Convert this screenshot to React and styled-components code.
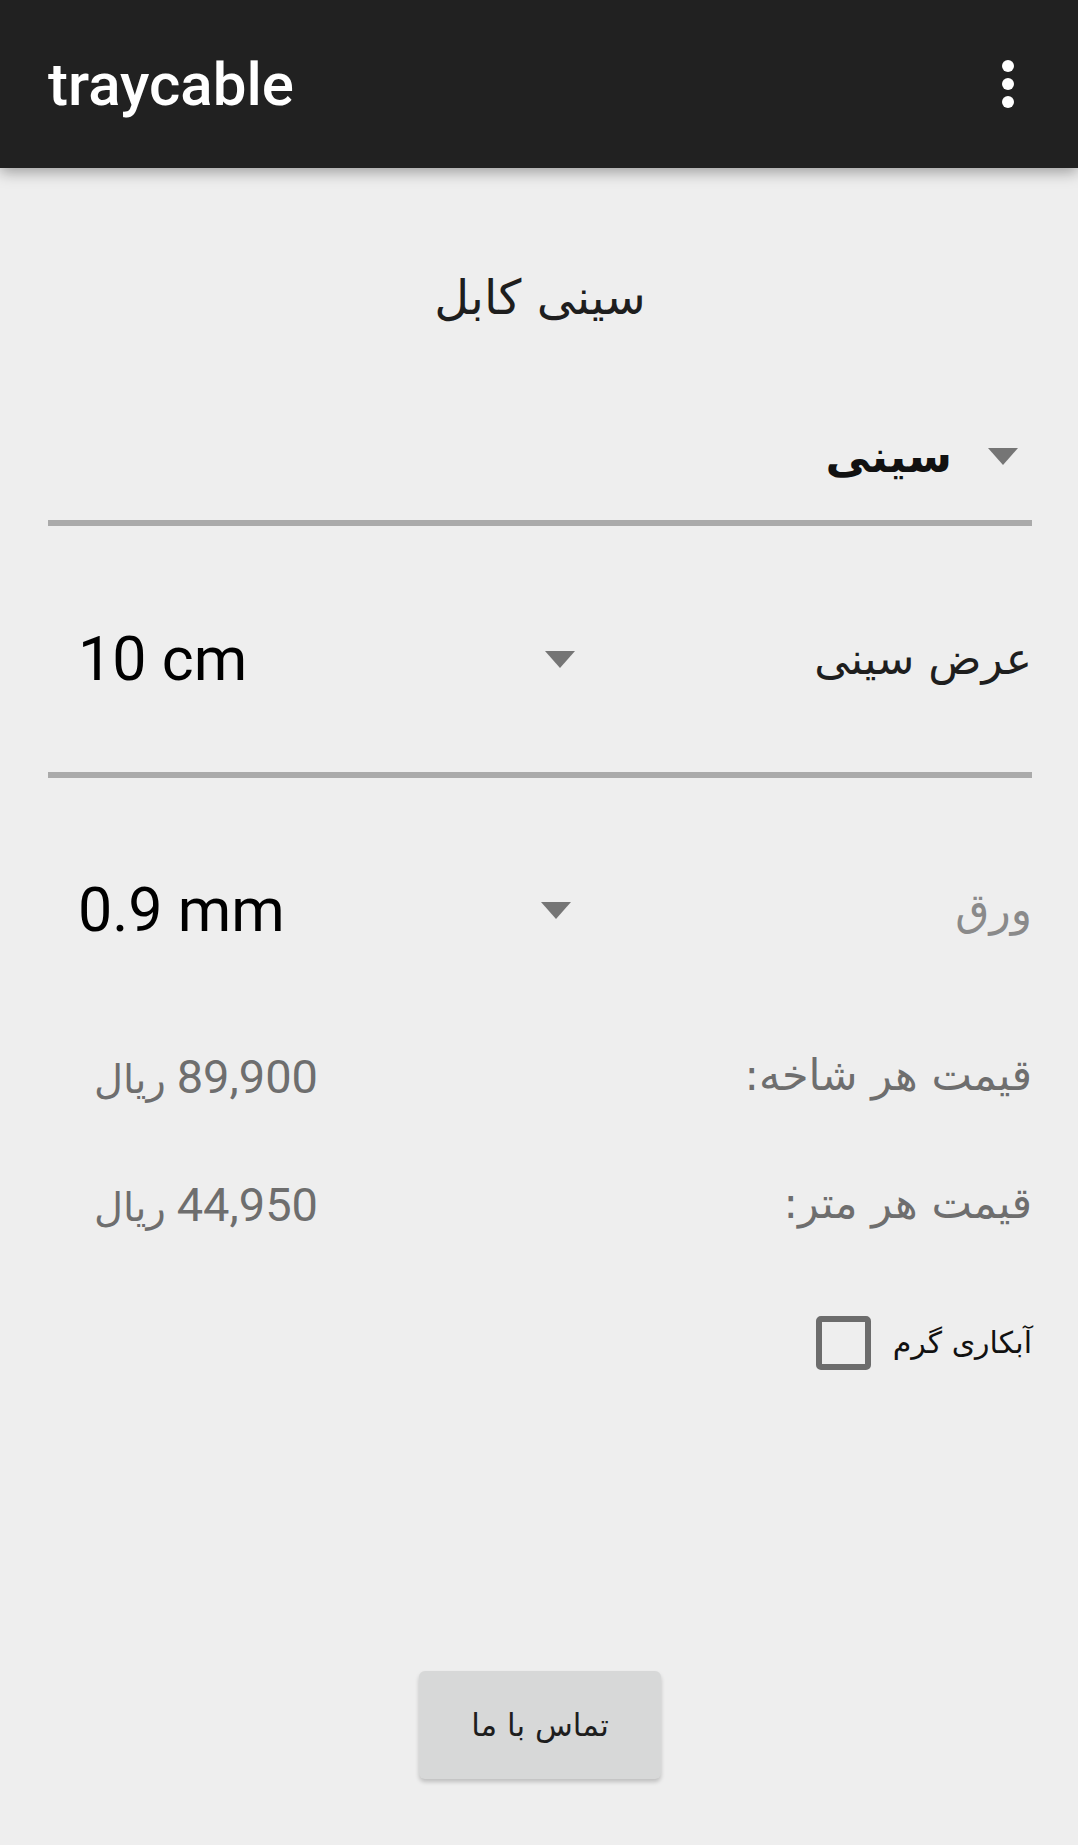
import React from "react"
import styled, { createGlobalStyle } from "styled-components"

const GlobalStyle = createGlobalStyle`
  html, body {
    margin: 0;
    padding: 0;
    background: #eeeeee;
  }
  body {
    font-family: Roboto, "DejaVu Sans", sans-serif;
  }
`

const Screen = styled.div`
  min-height: 1845px;
  display: flex;
  flex-direction: column;
  background: #eeeeee;
`

const AppBar = styled.header`
  position: relative;
  z-index: 2;
  height: 168px;
  flex-shrink: 0;
  display: flex;
  align-items: center;
  justify-content: space-between;
  padding: 0 34px 0 48px;
  background: #212121;
  box-shadow: 0 4px 14px rgba(0, 0, 0, 0.35);
`

const Title = styled.h1`
  margin: 0;
  color: #ffffff;
  font-family: Roboto, sans-serif;
  font-weight: 500;
  font-size: 60px;
  letter-spacing: 0;
`

const MenuButton = styled.button`
  width: 72px;
  height: 72px;
  padding: 0;
  border: 0;
  background: transparent;
  display: flex;
  align-items: center;
  justify-content: center;
`

const Content = styled.main`
  flex: 1;
  display: flex;
  flex-direction: column;
  padding: 0 46px 66px 48px;
`

const Heading = styled.h2`
  margin: 64px 0 0;
  height: 130px;
  display: flex;
  align-items: center;
  justify-content: center;
  font-family: "DejaVu Sans", sans-serif;
  font-weight: 400;
  font-size: 48px;
  color: #1e1e1e;
`

const TypeSpinner = styled.div`
  box-sizing: border-box;
  height: 164px;
  padding: 30px 14px 0 0;
  display: flex;
  align-items: center;
  justify-content: flex-end;
  gap: 36px;
  border-bottom: 6px solid #aaaaaa;
`

const TypeValue = styled.span`
  font-family: "DejaVu Sans", sans-serif;
  font-size: 45px;
  font-weight: 700;
  color: #111111;
  line-height: 1;
`

const FieldRow = styled.div`
  box-sizing: border-box;
  height: ${p => p.$height}px;
  padding-top: ${p => p.$offset}px;
  display: flex;
  align-items: center;
  justify-content: space-between;
  border-bottom: ${p => (p.$underline ? "6px solid #aaaaaa" : "0")};
`

const Spinner = styled.div`
  width: ${p => p.$width}px;
  box-sizing: border-box;
  padding: 0 17px 0 30px;
  display: flex;
  align-items: center;
  justify-content: space-between;
`

const SpinnerValue = styled.span`
  font-family: Roboto, sans-serif;
  font-size: 61px;
  color: #000000;
  line-height: 1;
`

const Arrow = styled.span`
  width: 0;
  height: 0;
  border-left: 15px solid transparent;
  border-right: 15px solid transparent;
  border-top: 17px solid #757575;
`

const Label = styled.span`
  font-family: "DejaVu Sans", sans-serif;
  font-size: ${p => p.$size}px;
  color: ${p => p.$color};
  line-height: 1.2;
  white-space: nowrap;
`

const PriceList = styled.div`
  display: flex;
  flex-direction: column;
  gap: 60px;
`

const PriceRow = styled.div`
  height: 68px;
  display: flex;
  align-items: center;
  justify-content: space-between;
  padding-left: 46px;
`

const Price = styled.span`
  display: flex;
  align-items: baseline;
  gap: 11px;
  font-family: Roboto, sans-serif;
  font-size: 47px;
  color: #6e6e6e;
  white-space: nowrap;
`

const Currency = styled.span`
  font-family: "DejaVu Sans", sans-serif;
  font-size: 40px;
`

const CheckRow = styled.label`
  margin-top: 75px;
  height: 60px;
  display: flex;
  align-items: center;
  justify-content: flex-end;
  gap: 22px;
`

const CheckBox = styled.span`
  box-sizing: border-box;
  width: 55px;
  height: 54px;
  border: 6px solid #6c6c6c;
  border-radius: 5px;
`

const ContactButton = styled.button`
  margin: auto auto 0;
  width: 242px;
  height: 108px;
  border: 0;
  border-radius: 6px;
  background: #d7d8d8;
  box-shadow: 0 3px 4px rgba(0, 0, 0, 0.2);
  font-family: "DejaVu Sans", sans-serif;
  font-size: 31px;
  color: #1e1e1e;
`

const MoreIcon = () => (
  <svg width="72" height="72" viewBox="0 0 24 24" fill="#ffffff">
    <circle cx="12" cy="6" r="2" />
    <circle cx="12" cy="12" r="2" />
    <circle cx="12" cy="18" r="2" />
  </svg>
)

const App = () => {
  return (
    <Screen>
      <GlobalStyle />
      <AppBar>
        <Title>traycable</Title>
        <MenuButton aria-label="more">
          <MoreIcon />
        </MenuButton>
      </AppBar>
      <Content>
        <Heading dir="rtl">سینی کابل</Heading>

        <TypeSpinner>
          <TypeValue dir="rtl">سینی</TypeValue>
          <Arrow />
        </TypeSpinner>

        <FieldRow $height={252} $offset={20} $underline>
          <Spinner $width={544}>
            <SpinnerValue>10 cm</SpinnerValue>
            <Arrow />
          </Spinner>
          <Label dir="rtl" $size={44} $color="#1e1e1e">
            عرض سینی
          </Label>
        </FieldRow>

        <FieldRow $height={264} $offset={0}>
          <Spinner $width={540}>
            <SpinnerValue>0.9 mm</SpinnerValue>
            <Arrow />
          </Spinner>
          <Label dir="rtl" $size={44} $color="#8a8a8a">
            ورق
          </Label>
        </FieldRow>

        <PriceList>
          <PriceRow>
            <Price dir="rtl">
              <span>89,900</span>
              <Currency>ریال</Currency>
            </Price>
            <Label dir="rtl" $size={43} $color="#6e6e6e">
              قیمت هر شاخه:
            </Label>
          </PriceRow>
          <PriceRow>
            <Price dir="rtl">
              <span>44,950</span>
              <Currency>ریال</Currency>
            </Price>
            <Label dir="rtl" $size={43} $color="#6e6e6e">
              قیمت هر متر:
            </Label>
          </PriceRow>
        </PriceList>

        <CheckRow>
          <CheckBox />
          <Label dir="rtl" $size={30} $color="#111111">
            آبکاری گرم
          </Label>
        </CheckRow>

        <ContactButton dir="rtl">تماس با ما</ContactButton>
      </Content>
    </Screen>
  )
}

export default App
